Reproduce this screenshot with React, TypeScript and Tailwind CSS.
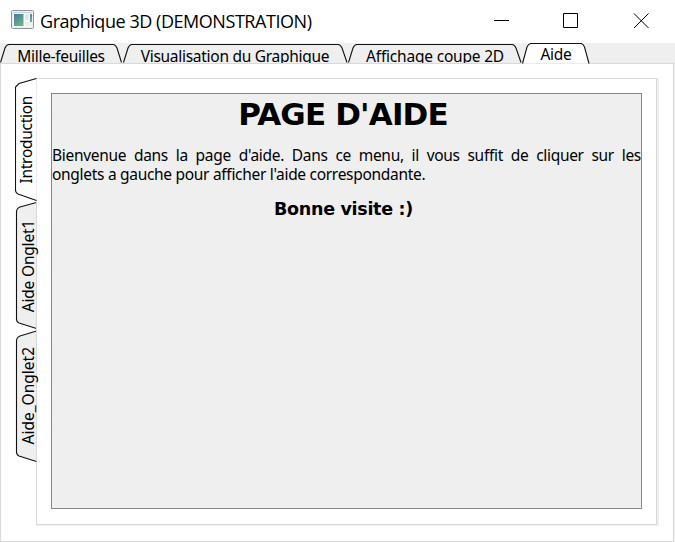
import type { ReactNode } from "react";

type TopTabProps = { width: string; shape: string; active?: boolean; view: string; children: ReactNode };

function TopTab({ width, shape, active, view, children }: TopTabProps) {
  return (
    <div className={`relative shrink-0 ${width} ${active ? "z-10 h-[21px]" : "h-5 overflow-hidden"}`}>
      <svg className="absolute inset-0 h-full w-full" viewBox={view} fill={active ? "#ffffff" : "#efefef"}>
        <path d={shape} stroke="#111111" strokeWidth="1.1" />
      </svg>
      <div className={`relative whitespace-nowrap text-center leading-5 ${active ? "pt-px" : "pt-[3px]"}`}>{children}</div>
    </div>
  );
}

type SideTabProps = { size: string; shape: string; view: string; active?: boolean; children: ReactNode };

function SideTab({ size, shape, view, active, children }: SideTabProps) {
  return (
    <div className={`relative flex w-[22px] shrink-0 items-center ${size}`}>
      <svg className="absolute inset-0 h-full w-full" viewBox={view} fill={active ? "#ffffff" : "#efefef"}>
        <path d={shape} stroke="#111111" strokeWidth="1.1" />
        {!active && <path d="M21.5 0V131" stroke="#d9d9d9" />}
      </svg>
      <div className={`relative rotate-180 whitespace-nowrap leading-5 [writing-mode:vertical-rl] ${active ? "ml-px" : "ml-[3px]"}`}>
        {children}
      </div>
    </div>
  );
}

function WindowIcon() {
  return (
    <svg width="23" height="19" viewBox="0 0 23 19">
      <defs>
        <linearGradient id="screen" x1="0" y1="0" x2="0.5" y2="1">
          <stop offset="0" stopColor="#4e79a8" />
          <stop offset="1" stopColor="#5fb585" />
        </linearGradient>
      </defs>
      <rect x="0.5" y="0.5" width="22" height="18" rx="1" fill="#edf0f2" stroke="#8d949b" />
      <path d="M2 2.5H21" stroke="#d0d4d8" />
      <rect x="2.5" y="4" width="18.5" height="12.5" fill="#fbfcfc" />
      <rect x="3" y="4" width="9.5" height="12" fill="url(#screen)" />
      <rect x="14" y="4" width="3.5" height="6" fill="#dfe6ea" />
      <rect x="19" y="4" width="2" height="8" fill="url(#screen)" />
      <rect x="14" y="12" width="7" height="4" fill="#eceff1" />
    </svg>
  );
}

export default function App() {
  return (
    <div className="flex h-[542px] w-[675px] flex-col overflow-hidden bg-[#efefef] font-['Noto_Sans',sans-serif] text-[15.5px] text-black">
      <header className="flex h-[43px] shrink-0 items-start bg-white pl-[11px]">
        <div className="pt-[10px]"><WindowIcon /></div>
        <h1 className="ml-[6px] whitespace-nowrap pt-[9px] font-['Open_Sans',sans-serif] text-[18px] leading-6 tracking-[-0.45px]">
          Graphique 3D (DEMONSTRATION)
        </h1>
        <svg className="ml-auto mr-[25px] mt-[13px]" width="156" height="15" viewBox="0 0 156 15" fill="none" stroke="#000000">
          <path d="M0 7.5H15M69.5 0.5H83.5V14.5H69.5ZM140 0.5L154.500 15M154.500 0.500L140 15" />
        </svg>
      </header>

      <nav className="flex h-5 shrink-0 items-end">
        <TopTab width="w-[122px]" view="0 0 122 20" shape="M0.5 19.5L5 5Q6.5 1.5 9 1.5H113Q115.500 1.5 117 5L121.500 19.5">
          <span className="tracking-[-0.3px]">Mille-feuilles</span>
        </TopTab>
        <TopTab width="w-[226px]" view="0 0 226 20" shape="M1.5 19.5L6 5Q7.500 1.5 10 1.5H216Q218.500 1.5 220 5L225 19.5">
          <span className="tracking-[-0.28px]">Visualisation du Graphique</span>
        </TopTab>
        <TopTab width="w-[174px]" view="0 0 174 20" shape="M0.5 19.5L5 5Q6.500 1.5 9 1.5H164Q166.500 1.5 168 5L173 19.5">
          <span className="tracking-[-0.2px]">Affichage coupe 2D</span>
        </TopTab>
        <div className="-mb-px">
          <TopTab active width="w-[68px]" view="0 0 68 21" shape="M0.5 20.5L5 4Q6.500 0.5 9 0.5H59Q61 0.5 62.500 4L67 20.5">
            <span className="tracking-[-0.3px]">Aide</span>
          </TopTab>
        </div>
      </nav>

      <main className="mr-px flex grow border border-[#d9d9d9] bg-white pl-[14px] pt-[14px]">
        <aside className="z-10 -mr-px flex w-[22px] shrink-0 flex-col">
          <SideTab active size="h-[123px]" view="0 0 22 123" shape="M21.500 0.5L4 5.500L0.5 9V112Q0.5 115 3 116L21.500 122.500">
            <span className="tracking-[-0.3px]">Introduction</span>
          </SideTab>
          <SideTab size="mt-px h-[128px]" view="0 0 22 128" shape="M21.500 0.5L5 5Q1.500 6.500 1.500 10V117Q1.500 120 4 121L21.500 126.500">
            <span className="tracking-[-0.2px]">Aide Onglet1</span>
          </SideTab>
          <SideTab size="h-[132px]" view="0 0 22 132" shape="M21.500 1L5 6Q1.500 7.500 1.500 11V122Q1.500 125 4 126L21.500 131.500">
            Aide_Onglet2
          </SideTab>
        </aside>
        <div className="h-[448px] w-[623px] bg-[#f0f0f0] pb-px pr-[2px]">
          <section className="h-[447px] border border-[#d9d9d9] bg-white p-[14px]">
            <article className="h-[416px] w-[591px] border border-[#828790] bg-[#efefef]">
              <h2 className="pr-[7px] text-center font-['DejaVu_Sans',sans-serif] text-[31px] font-bold leading-10 tracking-[-0.85px]">
                PAGE D'AIDE
              </h2>
              <p className="mt-[12px] leading-[19px] tracking-[-0.3px]">
                <span className="block text-justify [text-align-last:justify]">
                  Bienvenue dans la page d'aide. Dans ce menu, il vous suffit de cliquer sur les
                </span>
                onglets a gauche pour afficher l'aide correspondante.
              </p>
              <h3 className="mt-[13px] pr-[6px] text-center font-['DejaVu_Sans',sans-serif] text-[17.5px] font-bold leading-6 tracking-[-0.3px]">Bonne visite :)</h3>
            </article>
          </section>
        </div>
      </main>
    </div>
  );
}
